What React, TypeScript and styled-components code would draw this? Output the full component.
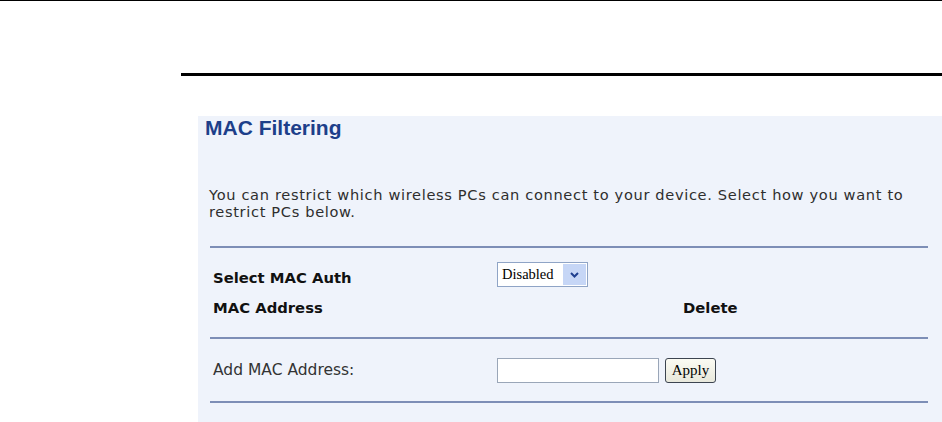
import React from "react";
import styled, { createGlobalStyle } from "styled-components";

const Global = createGlobalStyle`
  html, body { margin: 0; padding: 0; background: #ffffff; }
  body { width: 942px; height: 422px; overflow: hidden; font-family: "DejaVu Sans", Verdana, sans-serif; }
`;

const Page = styled.div`
  width: 942px;
  height: 422px;
  display: flex;
  flex-direction: column;
`;

const TopRule = styled.div`
  height: 1px;
  background: #000;
`;

const ThickRule = styled.div`
  height: 3px;
  background: #000;
  margin: 72px 0 0 181px;
`;

const Panel = styled.section`
  flex: 1;
  margin: 40px 0 0 198px;
  background: #eff3fb;
  padding: 0 14px 0 12px;
  display: flex;
  flex-direction: column;
`;

const Title = styled.h1`
  margin: 0 0 0 -5px;
  font-family: "Liberation Sans", Arial, sans-serif;
  font-weight: bold;
  font-size: 21px;
  line-height: 24px;
  color: #1d3f8a;
`;

const Intro = styled.p`
  margin: 46px 0 0 -1px;
  font-size: 14.6px;
  letter-spacing: 0.66px;
  line-height: 17px;
  color: #2e2e2e;
  white-space: nowrap;
`;

const Divider = styled.div<{ $gap: number }>`
  height: 2px;
  background: #7d8eb6;
  margin-top: ${(p) => p.$gap}px;
`;

const Row = styled.div<{ $h: number; $top?: number }>`
  display: grid;
  grid-template-columns: 284px 1fr;
  align-items: center;
  height: ${(p) => p.$h}px;
  margin-top: ${(p) => p.$top ?? 0}px;
  padding-left: 3px;
`;

const Label = styled.span<{ $bold?: boolean }>`
  font-size: ${(p) => (p.$bold ? "14.8px" : "15.5px")};
  font-weight: ${(p) => (p.$bold ? "bold" : "normal")};
  color: ${(p) => (p.$bold ? "#111" : "#333")};
  white-space: nowrap;
`;

const Cell = styled.div`
  display: flex;
  align-items: center;
  gap: 6px;
`;

const DeleteHead = styled.span`
  margin-left: 186px;
  font-size: 14.8px;
  font-weight: bold;
  color: #111;
`;

const SelectBox = styled.div`
  width: 89px;
  height: 23px;
  margin-top: -5px;
  border: 1px solid #8fa4c6;
  background: #fff;
  display: flex;
  align-items: stretch;
  box-sizing: content-box;
`;

const SelectText = styled.span`
  flex: 1;
  font-family: "Liberation Serif", "Times New Roman", serif;
  font-size: 14.5px;
  line-height: 22px;
  padding-left: 4px;
  color: #000;
`;

const ArrowBtn = styled.span`
  width: 23px;
  margin: 1px;
  background: #c6d6f6;
  display: flex;
  align-items: center;
  justify-content: center;
`;

const TextInput = styled.div`
  width: 160px;
  height: 23px;
  border: 1px solid #9aa6b8;
  background: #fff;
`;

const ApplyBtn = styled.button`
  width: 51px;
  height: 25px;
  padding: 0;
  border: 1px solid #3c4450;
  border-radius: 3px;
  background: linear-gradient(#fbfbf3, #e8e8dc);
  font-family: "Liberation Serif", "Times New Roman", serif;
  font-size: 15px;
  color: #000;
`;

export default function App() {
  return (
    <>
      <Global />
      <Page>
        <TopRule />
        <ThickRule />
        <Panel>
          <Title>MAC Filtering</Title>
          <Intro>
            You can restrict which wireless PCs can connect to your device. Select how you want to
            <br />
            restrict PCs below.
          </Intro>
          <Divider $gap={26} />
          <Row $h={30} $top={14}>
            <Label $bold>Select MAC Auth</Label>
            <Cell>
              <SelectBox>
                <SelectText>Disabled</SelectText>
                <ArrowBtn>
                  <svg width="9" height="6" viewBox="0 0 9 6">
                    <path d="M1 1 L4.5 4.5 L8 1" stroke="#1f3f8f" strokeWidth="2" fill="none" />
                  </svg>
                </ArrowBtn>
              </SelectBox>
            </Cell>
          </Row>
          <Row $h={30}>
            <Label $bold>MAC Address</Label>
            <DeleteHead>Delete</DeleteHead>
          </Row>
          <Divider $gap={15} />
          <Row $h={34} $top={14}>
            <Label>Add MAC Address:</Label>
            <Cell>
              <TextInput />
              <ApplyBtn>Apply</ApplyBtn>
            </Cell>
          </Row>
          <Divider $gap={14} />
        </Panel>
      </Page>
    </>
  );
}
